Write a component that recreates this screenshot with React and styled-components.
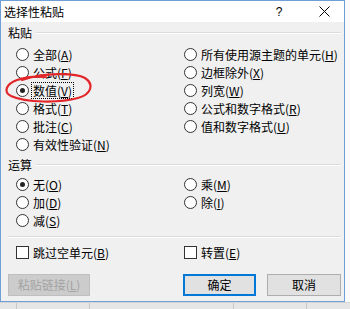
import React from 'react'
import styled, { createGlobalStyle } from 'styled-components'

const Global = createGlobalStyle`
  html, body { margin: 0; padding: 0; }
  body {
    background: #fbfbfc;
    font-family: "Noto Sans CJK SC", "Noto Sans", sans-serif;
    font-size: 12px;
    color: #000;
  }
`

const Page = styled.div`
  width: 350px;
  height: 309px;
  display: flex;
  flex-direction: column;
`

const Window = styled.div`
  position: relative;
  width: 345px;
  height: 302px;
  box-sizing: border-box;
  border: 1px solid #6f9fd6;
  background: #f0f0f0;
  display: flex;
  flex-direction: column;
`

const SheetStrip = styled.div`
  flex: 1;
  background: #e6e6e6;
  border-top: 1px solid #d4d4d4;
  display: flex;
`

const SheetCell = styled.div`
  width: ${p => p.w}px;
  border-right: 1px solid #c8c8c8;
`

const TitleBar = styled.div`
  height: 21px;
  background: #fff;
  display: flex;
  align-items: center;
  padding-left: 3px;
`

const TitleText = styled.div`
  flex: 1;
  font-size: 12px;
  line-height: 14px;
`

const Help = styled.span`
  width: 10px;
  text-align: center;
  font-family: "Liberation Sans", sans-serif;
  font-size: 12px;
  margin-right: 35px;
`

const Close = styled.svg`
  width: 11px;
  height: 11px;
  margin-right: 14px;
`

const Body = styled.div`
  flex: 1;
  display: flex;
  flex-direction: column;
  padding: 3px 3px 0 7px;
`

const SectionHeader = styled.div`
  display: flex;
  align-items: center;
  gap: 4px;
  height: 16px;
  margin-top: ${p => p.mt || 0}px;
`

const SectionLabel = styled.span`
  line-height: 14px;
`

const Rule = styled.div`
  flex: 1;
  height: 1px;
  background: #dcdcdc;
  border-bottom: 1px solid #fff;
`

const Grid = styled.div`
  display: flex;
  padding-left: 8px;
  margin-top: ${p => p.mt || 0}px;
`

const Column = styled.div`
  display: flex;
  flex-direction: column;
  width: ${p => (p.w ? `${p.w}px` : 'auto')};
`

const Row = styled.div`
  height: 18px;
  display: flex;
  align-items: center;
  gap: 4px;
  white-space: nowrap;
`

const Radio = styled.span`
  width: 13px;
  height: 13px;
  box-sizing: border-box;
  border: 1px solid #333;
  border-radius: 50%;
  background: #fff;
  display: flex;
  align-items: center;
  justify-content: center;
  flex-shrink: 0;
  &::after {
    content: '';
    width: 5px;
    height: 5px;
    border-radius: 50%;
    background: ${p => (p.checked ? '#222' : 'transparent')};
  }
`

const Check = styled.span`
  width: 13px;
  height: 13px;
  box-sizing: border-box;
  border: 1px solid #333;
  background: #fff;
  flex-shrink: 0;
`

const Label = styled.span`
  line-height: 13px;
  outline: ${p => (p.focused ? '1px dotted #000' : 'none')};
  outline-offset: 1px;
`

const FullRule = styled.div`
  height: 1px;
  background: #dcdcdc;
  border-bottom: 1px solid #fff;
  margin-top: ${p => p.mt || 0}px;
`

const ButtonRow = styled.div`
  display: flex;
  align-items: center;
  margin-top: 13px;
`

const Button = styled.div`
  width: ${p => p.w}px;
  height: 22px;
  box-sizing: border-box;
  display: flex;
  align-items: center;
  justify-content: center;
  background: ${p => (p.disabled ? '#cccccc' : '#e1e1e1')};
  color: ${p => (p.disabled ? '#a3a3a3' : '#000')};
  border: ${p => (p.primary ? '2px solid #0078d7' : p.disabled ? '1px solid #bfbfbf' : '1px solid #adadad')};
  margin-left: ${p => p.ml || 0}px;
  line-height: 14px;
`

const Spacer = styled.div`
  flex: 1;
`

const Scribble = styled.svg`
  position: absolute;
  left: -1px;
  top: -1px;
  width: 345px;
  height: 302px;
  pointer-events: none;
`

const Opt = ({ text, k, checked, focused, check }) => (
  <Row>
    {check ? <Check /> : <Radio checked={checked} />}
    <Label focused={focused}>
      {text}(<u>{k}</u>)
    </Label>
  </Row>
)

const pasteLeft = [
  ['全部', 'A'],
  ['公式', 'F'],
  ['数值', 'V', true],
  ['格式', 'T'],
  ['批注', 'C'],
  ['有效性验证', 'N'],
]

const pasteRight = [
  ['所有使用源主题的单元', 'H'],
  ['边框除外', 'X'],
  ['列宽', 'W'],
  ['公式和数字格式', 'R'],
  ['值和数字格式', 'U'],
]

export default function App() {
  return (
    <Page>
      <Global />
      <Window>
        <TitleBar>
          <TitleText>选择性粘贴</TitleText>
          <Help>?</Help>
          <Close viewBox="0 0 11 11">
            <path d="M0.5 0.5 L10.5 10.5 M10.5 0.5 L0.5 10.5" stroke="#000" strokeWidth="1" />
          </Close>
        </TitleBar>
        <Body>
          <SectionHeader>
            <SectionLabel>粘贴</SectionLabel>
            <Rule />
          </SectionHeader>
          <Grid mt={4}>
            <Column w={168}>
              {pasteLeft.map(([t, k, c]) => (
                <Opt key={k} text={t} k={k} checked={c} focused={c} />
              ))}
            </Column>
            <Column>
              {pasteRight.map(([t, k]) => (
                <Opt key={k} text={t} k={k} />
              ))}
            </Column>
          </Grid>
          <SectionHeader mt={4}>
            <SectionLabel>运算</SectionLabel>
            <Rule />
          </SectionHeader>
          <Grid mt={2}>
            <Column w={168}>
              <Opt text="无" k="O" checked />
              <Opt text="加" k="D" />
              <Opt text="减" k="S" />
            </Column>
            <Column>
              <Opt text="乘" k="M" />
              <Opt text="除" k="I" />
            </Column>
          </Grid>
          <FullRule mt={7} />
          <Grid mt={5}>
            <Column w={168}>
              <Opt text="跳过空单元" k="B" check />
            </Column>
            <Column>
              <Opt text="转置" k="E" check />
            </Column>
          </Grid>
          <ButtonRow>
            <Button w={82} disabled>
              粘贴链接(<u>L</u>)
            </Button>
            <Spacer />
            <Button w={73} primary>确定</Button>
            <Button w={74} ml={11}>取消</Button>
          </ButtonRow>
        </Body>
        <Scribble viewBox="0 0 345 302">
          <path
            d="M22 80 C45 72, 76 73, 85 78 C94 84, 92 94, 78 98 C60 103, 26 103, 11 96 C3 92, 6 84, 17 80 C26 77, 36 76, 46 77"
            fill="none"
            stroke="#e3262a"
            strokeWidth="2.2"
            strokeLinecap="round"
          />
        </Scribble>
      </Window>
      <SheetStrip>
        <SheetCell w={16} />
        <SheetCell w={72} />
        <SheetCell w={143} />
        <SheetCell w={72} />
      </SheetStrip>
    </Page>
  )
}
